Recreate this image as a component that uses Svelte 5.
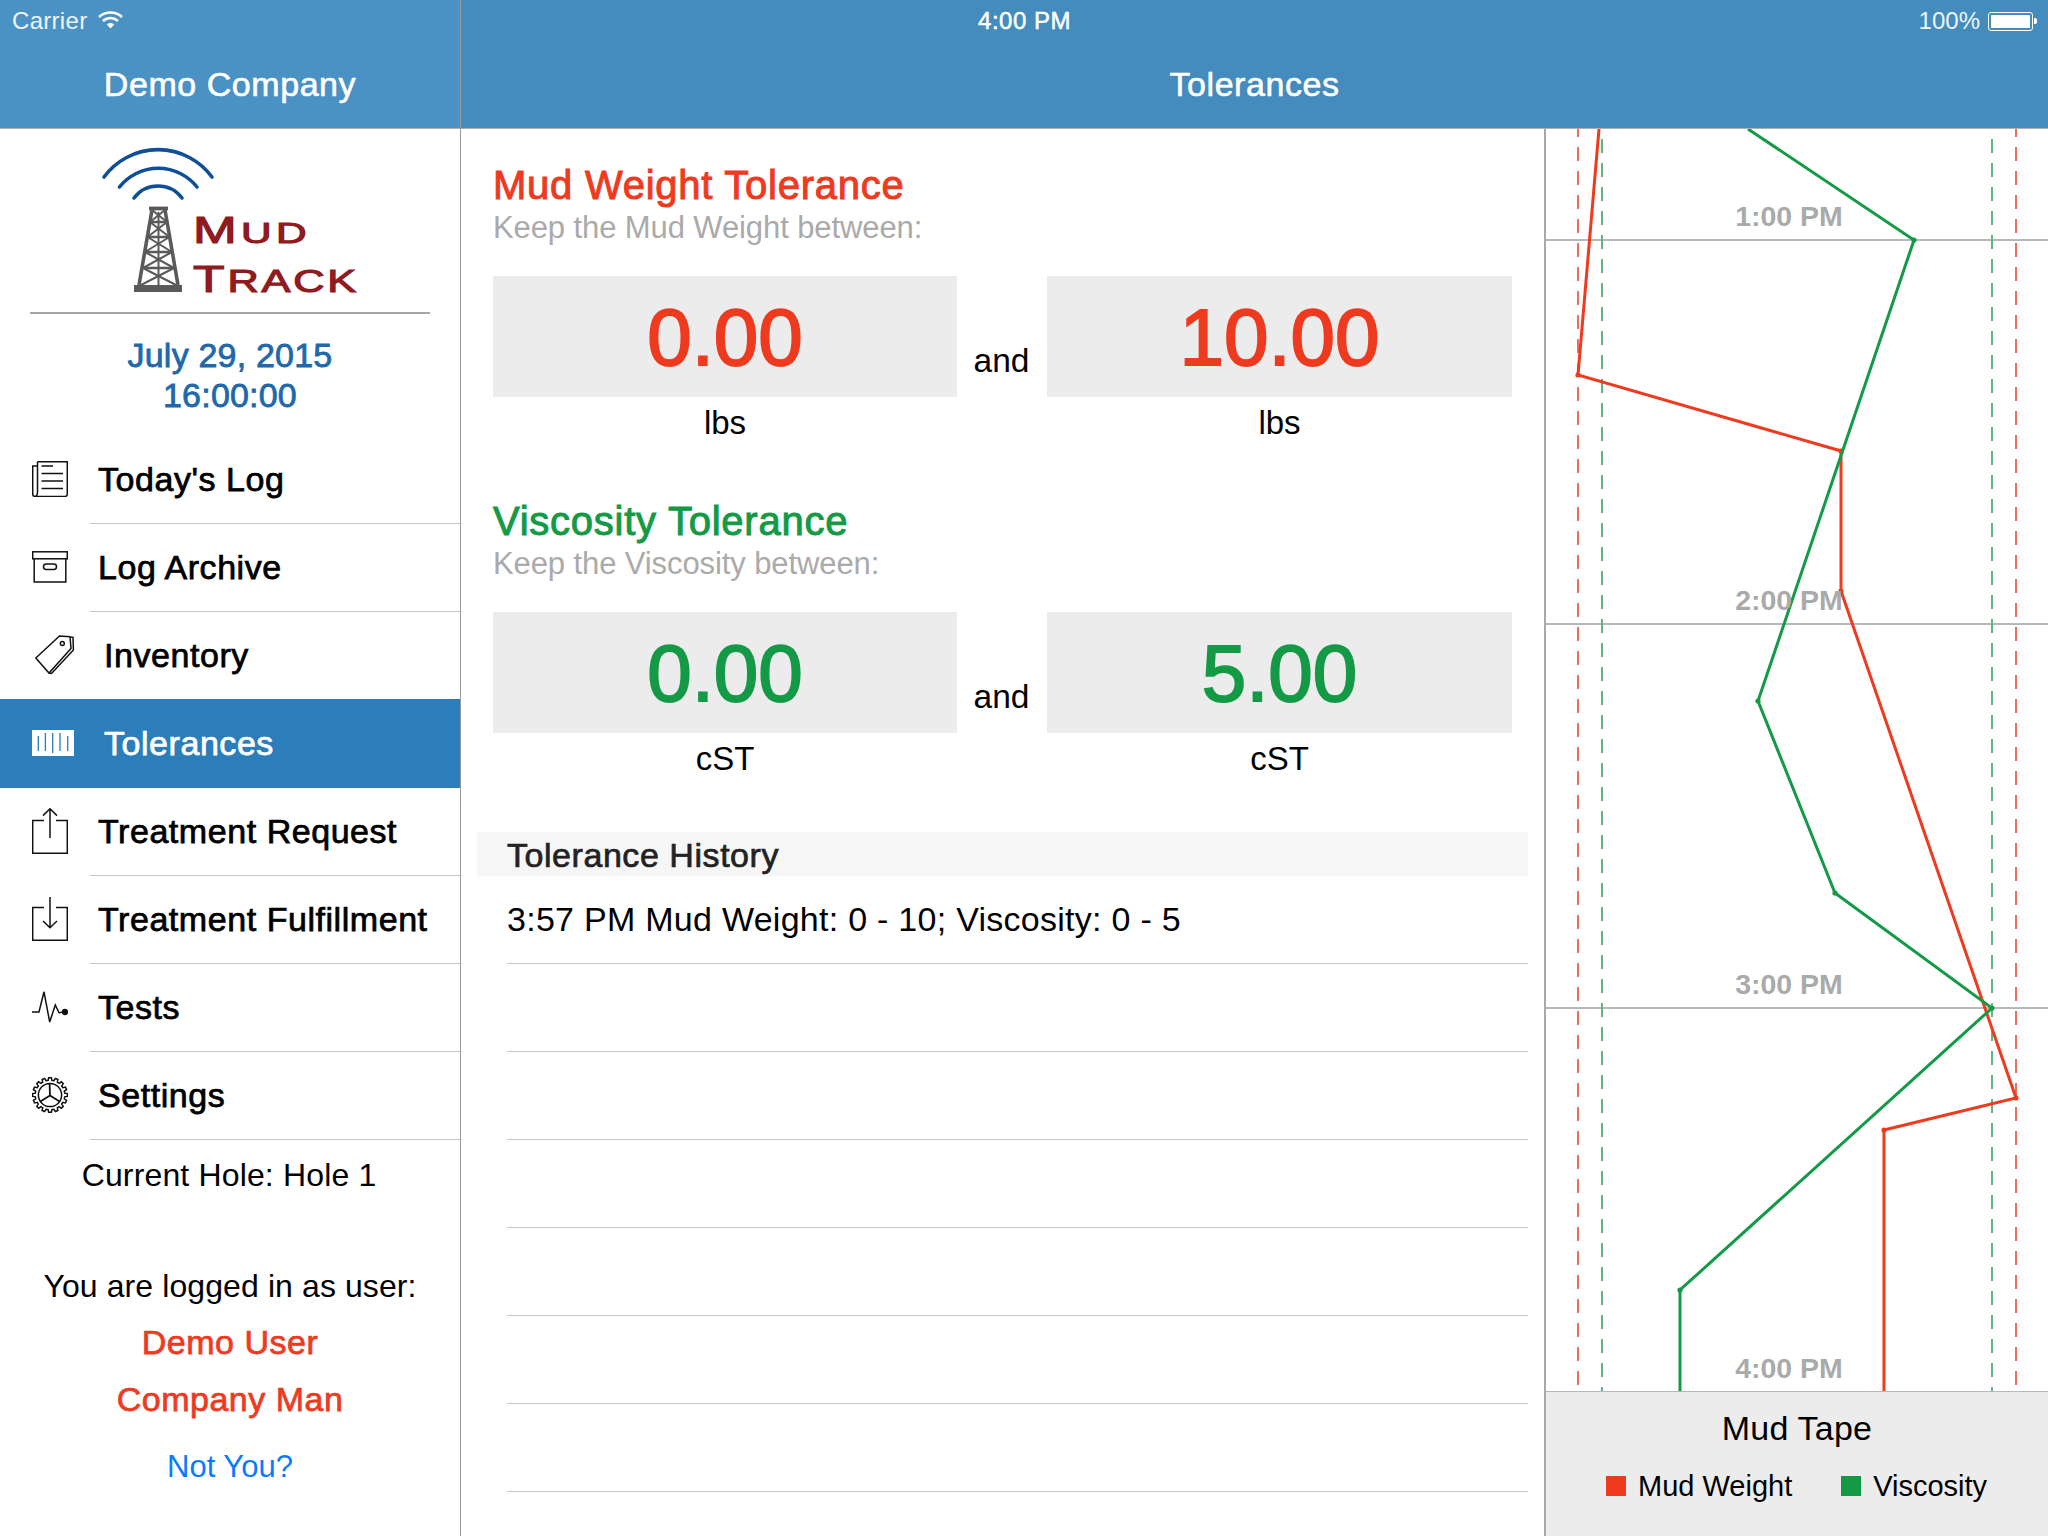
<script>
  const menu = [
    { label: "Today's Log", icon: 'log' },
    { label: 'Log Archive', icon: 'archive' },
    { label: 'Inventory', icon: 'tag' },
    { label: 'Tolerances', icon: 'bars', active: true },
    { label: 'Treatment Request', icon: 'up' },
    { label: 'Treatment Fulfillment', icon: 'down' },
    { label: 'Tests', icon: 'pulse' },
    { label: 'Settings', icon: 'gear' }
  ];

  const tolerances = [
    { title: 'Mud Weight Tolerance', sub: 'Keep the Mud Weight between:', low: '0.00', high: '10.00', unit: 'lbs', tone: 'red' },
    { title: 'Viscosity Tolerance', sub: 'Keep the Viscosity between:', low: '0.00', high: '5.00', unit: 'cST', tone: 'green' }
  ];

  const history = ['3:57 PM Mud Weight: 0 - 10; Viscosity: 0 - 5', '', '', '', '', '', ''];

  // chart coordinates: x is from the chart's left edge, y from the top of the page
  const left = 1546;
  const mud = [[1599, 129], [1578, 375], [1841, 451], [1841, 591], [2016, 1098], [1884, 1130], [1884, 1391]];
  const visc = [[1748, 129], [1914, 240], [1758, 701], [1835, 893], [1992, 1008], [1680, 1290], [1680, 1391]];
  const hours = [
    { y: 240, label: '1:00 PM' },
    { y: 624, label: '2:00 PM' },
    { y: 1008, label: '3:00 PM' },
    { y: 1392, label: '4:00 PM' }
  ];
  const pts = (list) => list.map(([x, y]) => `${x - left},${y - 129}`).join(' ');

  // cog outline with 16 teeth
  function gearPath() {
    const d = [];
    const n = 16;
    for (let i = 0; i < n; i++) {
      const a = (i / n) * Math.PI * 2;
      const s = (Math.PI * 2) / n;
      const p = (r, t) => `${(18 + r * Math.sin(t)).toFixed(2)} ${(18 - r * Math.cos(t)).toFixed(2)}`;
      d.push((i ? 'L' : 'M') + p(14.8, a - s * 0.32));
      d.push('L' + p(17.4, a - s * 0.2));
      d.push('L' + p(17.4, a + s * 0.2));
      d.push('L' + p(14.8, a + s * 0.32));
    }
    return d.join(' ') + ' Z';
  }
  const gear = gearPath();
</script>

<div class="app">
  <div class="status">
    <div class="carrier">
      Carrier
      <svg width="25" height="18" viewBox="0 0 25 18">
        <path d="M1 6 C7.5 0 17.5 0 24 6" class="wifi" />
        <path d="M5 10 C9.5 6 15.5 6 20 10" class="wifi" />
        <path d="M8.8 13.6 C11 11.6 14 11.6 16.2 13.6 L12.5 17.4 Z" fill="#fff" />
      </svg>
    </div>
    <div class="clock">4:00 PM</div>
    <div class="power">
      100%
      <span class="battery"><span class="charge"></span></span>
      <span class="nub"></span>
    </div>
  </div>

  <aside class="side">
    <header class="bar bar-side"><span class="bar-title">Demo Company</span></header>

    <svg class="logo" width="460" height="183" viewBox="0 129 460 183">
      <g fill="none" stroke="#0f4f97" stroke-width="3.6" stroke-linecap="round">
        <path d="M104 177 A67 67 0 0 1 212 177" />
        <path d="M119.500 187 A49.5 49.5 0 0 1 197 187" />
        <path d="M134 198 A30 30 0 0 1 182 198" />
      </g>
      <g fill="none" stroke="#5a5a5a" stroke-width="2.6">
        <path d="M152 210 L139 285 M165 210 L178 285" stroke-width="3.6" />
        <path d="M149 208.500 H168" stroke-width="3.8" />
        <path d="M150 222 H167 M147.500 237 H169.500 M145 252 H172 M143 268 H174" />
        <path d="M150 222 L169.500 237 M167 222 L147.500 237 M147.500 237 L172 252 M169.500 237 L145 252 M145 252 L174 268 M172 252 L143 268 M143 268 L176 285 M174 268 L141 285 M152 210 L167 222 M165 210 L150 222" stroke-width="2" />
        <path d="M158.500 212 V285" stroke-width="2" />
      </g>
      <rect x="134" y="285" width="48" height="7" fill="#5a5a5a" />
      <text class="logo-word" x="193" y="243" textLength="118" lengthAdjust="spacingAndGlyphs" letter-spacing="3"><tspan font-size="36">M</tspan><tspan font-size="29">UD</tspan></text>
      <text class="logo-word" x="193" y="292" textLength="166" lengthAdjust="spacingAndGlyphs" letter-spacing="2"><tspan font-size="37">T</tspan><tspan font-size="31">RACK</tspan></text>
    </svg>

    <div class="stamp">
      <div>July 29, 2015</div>
      <div>16:00:00</div>
    </div>

    <nav class="menu">
      {#each menu as item}
        <div class="menu-row" class:active={item.active}>
          <span class="menu-icon">
            {#if item.icon === 'log'}
              <svg width="36" height="36" viewBox="0 0 36 36" class="line">
                <path d="M5.500 .7 H35.300 V33 Q35.300 35.400 33 35.400 H3 Q.7 35.400 .7 33 V5 H5.500 M5.500 .7 V31 Q5.500 35 3 35.400" />
                <path d="M9.500 5 H21 M9.500 12.400 H31 M9.500 20 H31 M9.500 27.600 H31" />
              </svg>
            {:else if item.icon === 'archive'}
              <svg width="36" height="32" viewBox="0 0 36 32" class="line">
                <rect x=".7" y=".8" width="34.600" height="7" />
                <path d="M2.200 7.800 V31 H33.800 V7.800" />
                <rect x="11.500" y="13" width="13" height="5.400" rx="2.700" />
              </svg>
            {:else if item.icon === 'tag'}
              <svg width="40" height="40" viewBox="0 0 40 40" class="line tag">
                <path d="M.8 23 L24.500 1 L35 1.800 L36 13.500 L14 38 Z" />
                <path d="M35.400 2 L38 2.400 L38.400 15 L16.500 38.400 L14 38" />
                <circle cx="27.300" cy="8.600" r="2" />
              </svg>
            {:else if item.icon === 'bars'}
              <svg width="42" height="26" viewBox="0 0 42 26">
                <rect width="42" height="26" fill="#fff" />
                <path d="M6.300 6 V21 M13.400 3 V21 M20.700 3 V23 M28 3 V21 M35.700 6 V21" stroke="#2b7eb9" stroke-width="1.300" />
              </svg>
            {:else if item.icon === 'up'}
              <svg width="36" height="46" viewBox="0 0 36 46" class="line">
                <path d="M12 12.500 H.7 V45.300 H35.300 V12.500 H24" />
                <path d="M18 1 V30 M11 7.600 L18 .8 L25 7.600" />
              </svg>
            {:else if item.icon === 'down'}
              <svg width="36" height="44" viewBox="0 0 36 44" class="line">
                <path d="M12 10.600 H.7 V43.300 H35.300 V10.600 H24" />
                <path d="M18 0 V30.600 M11 24 L18 30.800 L25 24" />
              </svg>
            {:else if item.icon === 'pulse'}
              <svg width="36" height="32" viewBox="0 0 36 32" class="line">
                <path d="M0 21 H7 L12 .8 L17.700 31 L23.300 14 L27 21.700 L32 21" />
                <circle cx="33" cy="21" r="2.400" fill="#111" />
              </svg>
            {:else if item.icon === 'gear'}
              <svg width="36" height="36" viewBox="0 0 36 36" class="line">
                <path d={gear} />
                <circle cx="18" cy="18" r="11.600" />
                <path d="M18 18.600 L17.600 7 M18 18.600 L8.400 24.600 M18 18.600 L27.600 24.600" stroke-width="1.800" />
              </svg>
            {/if}
          </span>
          <span class="menu-label" class:shift={item.icon === 'tag' || item.icon === 'bars'}>{item.label}</span>
        </div>
      {/each}
    </nav>

    <div class="who">
      <div class="hole">Current Hole: Hole 1</div>
      <div class="logged">You are logged in as user:</div>
      <div class="user">Demo User</div>
      <div class="user">Company Man</div>
      <div class="not-you">Not You?</div>
    </div>
  </aside>

  <div class="right">
    <header class="bar"><span class="bar-title">Tolerances</span></header>
    <div class="content">
      <main class="main">
        {#each tolerances as t}
          <section class="tol {t.tone}">
            <h2>{t.title}</h2>
            <p class="hint">{t.sub}</p>
            <div class="range">
              <div class="box">{t.low}</div>
              <div class="and">and</div>
              <div class="box">{t.high}</div>
              <div class="unit">{t.unit}</div>
              <div></div>
              <div class="unit">{t.unit}</div>
            </div>
          </section>
        {/each}

        <div class="history-head">Tolerance History</div>
        {#each history as row}
          <div class="history-row"><span>{row}</span></div>
        {/each}
      </main>

      <div class="tape">
        <svg class="chart" width="502" height="1262" viewBox="0 0 502 1262">
          {#each hours as h}
            {#if h.y < 1391}
              <line x1="0" x2="502" y1={h.y - 129} y2={h.y - 129} class="grid" />
            {/if}
          {/each}
          <line x1={1578 - left} x2={1578 - left} y1="0" y2="1257" class="dash-red" />
          <line x1={2016 - left} x2={2016 - left} y1="0" y2="1257" class="dash-red" />
          <line x1={1602 - left} x2={1602 - left} y1="0" y2="1262" class="dash-green" />
          <line x1={1992 - left} x2={1992 - left} y1="0" y2="1262" class="dash-green" />
          <polyline points={pts(mud)} fill="none" stroke="#ee3a1f" stroke-width="3" />
          {#each mud.slice(1, -1) as [x, y]}
            <circle cx={x - left} cy={y - 129} r="2.600" fill="#ee3a1f" />
          {/each}
          <polyline points={pts(visc)} fill="none" stroke="#149a46" stroke-width="3" />
          {#each visc.slice(1, -1) as [x, y]}
            <circle cx={x - left} cy={y - 129} r="2.600" fill="#149a46" />
          {/each}
          {#each hours as h}
            <text x={1789 - left} y={h.y - 129 - 14} text-anchor="middle" class="hour">{h.label}</text>
          {/each}
        </svg>
        <div class="legend">
          <div class="legend-title">Mud Tape</div>
          <div class="legend-keys">
            <span class="key"><i class="swatch red-bg"></i>Mud Weight</span>
            <span class="key"><i class="swatch green-bg"></i>Viscosity</span>
          </div>
        </div>
      </div>
    </div>
  </div>
</div>

<style>
  :global(body) {
    background: #fff;
  }

  .app {
    position: relative;
    display: flex;
    width: 2048px;
    height: 1536px;
    overflow: hidden;
    font-family: "Liberation Sans", Arial, sans-serif;
    color: #000;
    background: #fff;
  }

  .status {
    position: absolute;
    top: 0;
    left: 0;
    right: 0;
    height: 42px;
    display: flex;
    align-items: center;
    justify-content: space-between;
    padding: 0 11px 0 12px;
    color: #fff;
    font-size: 24px;
  }
  .carrier {
    display: flex;
    align-items: center;
    gap: 11px;
    width: 300px;
    color: #eef5fa;
    letter-spacing: 0.3px;
  }
  .carrier svg {
    margin-top: -2px;
  }
  .wifi {
    fill: none;
    stroke: #fff;
    stroke-width: 2.400;
  }
  .clock {
    letter-spacing: 0.5px;
    -webkit-text-stroke: 0.5px #fff;
  }
  .power {
    display: flex;
    align-items: center;
    justify-content: flex-end;
    width: 300px;
    color: #eef5fa;
  }
  .battery {
    display: block;
    width: 45px;
    height: 19px;
    margin-left: 8px;
    padding: 2px;
    border: 1px solid #fff;
    border-radius: 3px;
    box-sizing: border-box;
  }
  .charge {
    display: block;
    height: 100%;
    background: #fff;
    border-radius: 1px;
  }
  .nub {
    width: 3px;
    height: 6px;
    margin-left: 1px;
    background: #fff;
    border-radius: 0 2px 2px 0;
  }

  .bar {
    box-sizing: border-box;
    height: 129px;
    padding-top: 40px;
    background: #448bbe;
    border-bottom: 1px solid #a9b1b6;
    display: flex;
    justify-content: center;
    align-items: center;
  }
  .bar-side {
    background: #4a91c4;
  }
  .bar-title {
    color: #fff;
    font-size: 34px;
    letter-spacing: 0.55px;
    -webkit-text-stroke: 0.6px #fff;
  }

  .side {
    flex: none;
    display: flex;
    flex-direction: column;
    box-sizing: border-box;
    width: 461px;
    border-right: 1px solid #999;
  }
  .logo {
    display: block;
    flex: none;
  }
  .logo-word {
    fill: #8f1a20;
    stroke: #8f1a20;
    stroke-width: 1.1;
    font-family: "Liberation Sans", Arial, sans-serif;
  }
  .stamp {
    margin: 0 30px;
    height: 123px;
    box-sizing: border-box;
    border-top: 2px solid #a5a5a5;
    padding-top: 21px;
    text-align: center;
    font-size: 34px;
    line-height: 40px;
    color: #2068aa;
    letter-spacing: 0.2px;
    -webkit-text-stroke: 0.8px #2068aa;
  }

  .menu-row {
    display: flex;
    align-items: center;
    height: 88px;
    position: relative;
  }
  .menu-row:not(.active)::after {
    content: "";
    position: absolute;
    left: 90px;
    right: 0;
    bottom: -1px;
    height: 1px;
    background: #c6c6c6;
  }
  .menu-row.active {
    background: #2b7eb9;
    color: #fff;
    box-shadow: 0 1px 0 #2b7eb9;
  }
  .menu-icon {
    flex: none;
    width: 98px;
    padding-left: 32px;
    box-sizing: border-box;
    display: flex;
    align-items: center;
  }
  .menu-icon svg {
    display: block;
    flex: none;
  }
  .menu-label {
    font-size: 34px;
    letter-spacing: 0.55px;
    -webkit-text-stroke: 0.75px currentColor;
    margin-top: 1px;
  }
  .menu-label.shift {
    margin-left: 6px;
  }
  .line {
    fill: none;
    stroke: #111;
    stroke-width: 1.500;
  }
  .line.tag {
    margin-left: 3px;
  }

  .who {
    text-align: center;
    font-size: 32px;
    padding-top: 18px;
  }
  .hole {
    line-height: 36px;
    letter-spacing: 0.15px;
    margin-left: -2px;
  }
  .logged {
    margin-top: 75px;
    line-height: 36px;
    letter-spacing: 0.1px;
  }
  .user {
    color: #ee3a1f;
    font-size: 34px;
    line-height: 57px;
    letter-spacing: 0.5px;
    -webkit-text-stroke: 0.75px #ee3a1f;
  }
  .logged + .user {
    margin-top: 10px;
  }
  .not-you {
    margin-top: 21px;
    color: #0a7aff;
    font-size: 31px;
    line-height: 36px;
  }

  .right {
    flex: 1;
    display: flex;
    flex-direction: column;
    min-width: 0;
  }
  .content {
    flex: 1;
    display: flex;
    min-height: 0;
  }
  .main {
    flex: none;
    width: 1083px;
    box-sizing: border-box;
    padding-top: 34px;
  }

  .tol {
    padding-left: 32px;
    height: 336px;
  }
  .tol h2 {
    margin: 0;
    font-size: 40px;
    line-height: 44px;
    font-weight: 400;
    letter-spacing: 0.75px;
    -webkit-text-stroke: 1px currentColor;
  }
  .tol.red h2,
  .tol.red .box {
    color: #ee3a1f;
  }
  .tol.green h2,
  .tol.green .box {
    color: #149a46;
  }
  .hint {
    margin: 0;
    font-size: 31px;
    line-height: 42px;
    color: #aaa;
    letter-spacing: -0.1px;
  }
  .range {
    display: grid;
    grid-template-columns: 464px 90px 465px;
    grid-template-rows: 121px 44px;
    margin-top: 27px;
  }
  .box {
    box-sizing: border-box;
    padding-top: 2px;
    background: #ececec;
    display: flex;
    align-items: center;
    justify-content: center;
    font-size: 80px;
    -webkit-text-stroke: 1.9px currentColor;
  }
  .and {
    align-self: end;
    text-align: center;
    font-size: 33.500px;
    line-height: 36px;
    margin-bottom: 18px;
    margin-left: -1px;
  }
  .unit {
    align-self: end;
    text-align: center;
    font-size: 33px;
    line-height: 36px;
  }

  .history-head {
    box-sizing: border-box;
    margin: -3px 16px 0 16px;
    height: 44px;
    padding-left: 30px;
    background: #f6f6f6;
    color: #222;
    font-size: 34px;
    line-height: 46px;
    letter-spacing: 0.55px;
    -webkit-text-stroke: 0.7px #222;
  }
  .history-row {
    box-sizing: border-box;
    height: 88px;
    margin: 0 16px 0 46px;
    border-bottom: 1px solid #c6c6c6;
    display: flex;
    align-items: center;
    font-size: 34px;
    letter-spacing: 0.27px;
  }

  .tape {
    flex: none;
    box-sizing: border-box;
    width: 504px;
    border-left: 2px solid #a8a8a8;
    display: flex;
    flex-direction: column;
  }
  .chart {
    display: block;
    flex: none;
  }
  .grid {
    stroke: #b8b8b8;
    stroke-width: 2;
  }
  .dash-red {
    stroke: #e8705e;
    stroke-width: 2;
    stroke-dasharray: 14 10;
    stroke-dashoffset: 6;
  }
  .dash-green {
    stroke: #5cb880;
    stroke-width: 2;
    stroke-dasharray: 14 10;
    stroke-dashoffset: 14;
  }
  .hour {
    fill: #aaa;
    font-family: "Liberation Sans", Arial, sans-serif;
    font-size: 28.500px;
    font-weight: 700;
  }
  .legend {
    flex: 1;
    background: #ececec;
    border-top: 1px solid #b8b8b8;
    text-align: center;
  }
  .legend-title {
    font-size: 34px;
    line-height: 40px;
    margin-top: 16px;
    letter-spacing: 0.2px;
  }
  .legend-keys {
    display: flex;
    padding-left: 60px;
    margin-top: 20px;
    font-size: 29px;
    line-height: 36px;
  }
  .key {
    display: flex;
    align-items: center;
  }
  .key + .key {
    margin-left: 49px;
  }
  .swatch {
    display: block;
    width: 20px;
    height: 20px;
    margin-right: 12px;
  }
  .red-bg {
    background: #ee3a1f;
  }
  .green-bg {
    background: #149a46;
  }
</style>
